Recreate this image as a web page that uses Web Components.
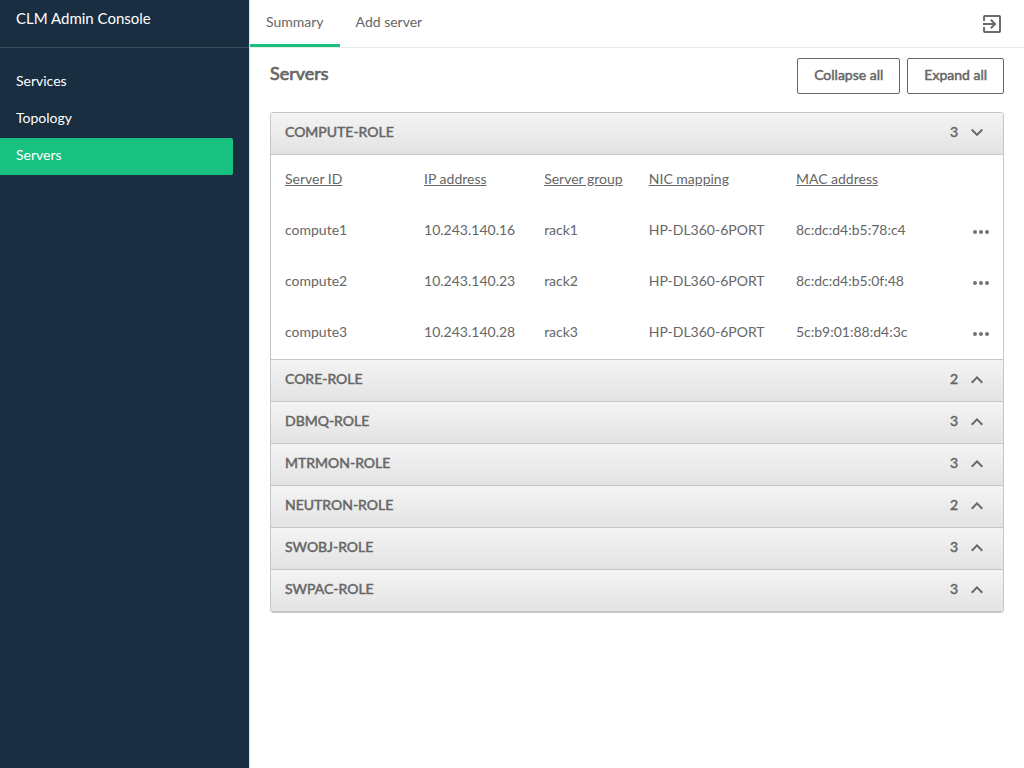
<!DOCTYPE html>
<html lang="en">
<head>
<meta charset="utf-8">
<meta name="viewport" content="width=device-width, initial-scale=1">
<title>CLM Admin Console</title>
<style>
  html { --accent: #19c181; --navy: #192e41; --text: #666; --line: #c6c6c6; }
  body { margin: 0; font: 14px/20px Lato, "Liberation Sans", sans-serif; color: var(--text); background: #fff; }
</style>
</head>
<body>
<clm-shell>
  <clm-sidebar slot="side" heading="CLM Admin Console">
    <clm-nav-item href="#services">Services</clm-nav-item>
    <clm-nav-item href="#topology">Topology</clm-nav-item>
    <clm-nav-item href="#servers" current>Servers</clm-nav-item>
  </clm-sidebar>
  <clm-tab-bar slot="top">
    <clm-tab href="#summary" current>Summary</clm-tab>
    <clm-tab href="#add-server">Add server</clm-tab>
  </clm-tab-bar>
  <clm-servers></clm-servers>
</clm-shell>
<script>
class Base extends HTMLElement {
  constructor() { super(); this.attachShadow({ mode: "open" }); }
  connectedCallback() { this.shadowRoot.innerHTML = this.render(); this.ready(); }
  ready() {}
}

const icons = {
  exit: '<path d="M10.09 15.59 11.5 17l5-5-5-5-1.41 1.41L12.67 11H3v2h9.67zM19 3H5a2 2 0 0 0-2 2v4h2V5h14v14H5v-4H3v4a2 2 0 0 0 2 2h14a2 2 0 0 0 2-2V5a2 2 0 0 0-2-2z"/>',
  down: '<path d="M7.41 7.84 12 12.42l4.59-4.58L18 9.25l-6 6-6-6z"/>',
  up: '<path d="M7.41 15.41 12 10.83l4.59 4.58L18 14l-6-6-6 6z"/>',
  more: '<path d="M6 10a2 2 0 1 0 0 4 2 2 0 0 0 0-4zm12 0a2 2 0 1 0 0 4 2 2 0 0 0 0-4zm-6 0a2 2 0 1 0 0 4 2 2 0 0 0 0-4z"/>'
};

customElements.define("clm-icon", class extends Base {
  render() {
    return `<style>
      :host { display: block; width: 24px; height: 24px; }
      svg { display: block; width: 100%; height: 100%; fill: currentColor; }
    </style><svg viewBox="0 0 24 24" aria-hidden="true">${icons[this.getAttribute("name")]}</svg>`;
  }
});

customElements.define("clm-shell", class extends Base {
  render() {
    return `<style>
      :host { display: grid; grid-template-columns: 249px minmax(0, 1fr); min-height: 100vh; }
      .main { border-left: 1px solid #e0e3e6; }
      main { padding: 10px 20px 20px; }
    </style>
    <slot name="side"></slot>
    <div class="main"><slot name="top"></slot><main><slot></slot></main></div>`;
  }
});

customElements.define("clm-sidebar", class extends Base {
  render() {
    return `<style>
      :host { display: block; background: var(--navy); color: #fff; }
      header { box-sizing: border-box; height: 48px; padding: 8px 16px; border-bottom: 1px solid #3a4f5c; font-size: 15px; line-height: 20px; }
      nav { padding: 16px 16px 0 0; }
    </style>
    <header>${this.getAttribute("heading")}</header>
    <nav aria-label="Main"><slot></slot></nav>`;
  }
});

customElements.define("clm-nav-item", class extends Base {
  render() {
    return `<style>
      :host { display: block; }
      a { display: block; padding: 7px 16px 10px; color: #fff; text-decoration: none; border-radius: 0 2px 2px 0; }
      :host([current]) a { background: var(--accent); }
    </style><a href="${this.getAttribute("href")}"><slot></slot></a>`;
  }
});

customElements.define("clm-tab-bar", class extends Base {
  render() {
    return `<style>
      :host { display: flex; justify-content: space-between; box-sizing: border-box; height: 48px; border-bottom: 1px solid #ebebeb; }
      nav { display: flex; }
      button { margin: 0 20px 0 0; padding: 0; border: 0; background: none; color: #6b6b6b; cursor: pointer; }
    </style>
    <nav aria-label="Views"><slot></slot></nav>
    <button type="button" aria-label="Log out"><clm-icon name="exit"></clm-icon></button>`;
  }
});

customElements.define("clm-tab", class extends Base {
  render() {
    return `<style>
      :host { display: block; }
      a { display: block; padding: 12px 16px; border-bottom: 3px solid transparent; color: inherit; text-decoration: none; }
      :host([current]) a { border-color: var(--accent); }
    </style><a href="${this.getAttribute("href")}"><slot></slot></a>`;
  }
});

customElements.define("clm-button", class extends Base {
  render() {
    return `<style>
      :host { display: block; }
      button { display: block; padding: 6px 16px 8px; border: 1px solid var(--text); border-radius: 2px; background: #fff; color: inherit; font: inherit; -webkit-text-stroke: 0.5px; cursor: pointer; }
    </style><button type="button"><slot></slot></button>`;
  }
});

customElements.define("clm-role", class extends Base {
  static get observedAttributes() { return ["open"]; }
  attributeChangedCallback() { if (this.isConnected && this.shadowRoot.firstChild) this.connectedCallback(); }
  render() {
    const open = this.hasAttribute("open");
    return `<style>
      :host { display: block; border-bottom: 1px solid var(--line); }
      h2 { margin: 0; font: inherit; }
      button { display: flex; align-items: flex-start; width: 100%; height: 41px; margin: 0; padding: 8px 14px 9px; border: 0; background: linear-gradient(#f4f4f4, #e3e3e3); color: inherit; font: inherit; text-align: left; cursor: pointer; }
      .name { flex: 1; padding-top: 1px; -webkit-text-stroke: 0.5px; }
      .count { padding: 1px 7px 0 0; -webkit-text-stroke: 0.5px; }
      .body { border-top: 1px solid var(--line); }
    </style>
    <h2><button type="button" aria-expanded="${open}">
      <span class="name">${this.getAttribute("name")}</span>
      <span class="count">${this.getAttribute("count")}</span>
      <clm-icon name="${open ? "down" : "up"}"></clm-icon>
    </button></h2>
    ${open ? '<div class="body"><slot></slot></div>' : ""}`;
  }
  ready() {
    this.shadowRoot.querySelector("button").onclick = () => this.toggleAttribute("open");
  }
});

customElements.define("clm-server-table", class extends Base {
  render() {
    const heads = ["Server ID", "IP address", "Server group", "NIC mapping", "MAC address"];
    const rows = [
      ["compute1", "10.243.140.16", "rack1", "HP-DL360-6PORT", "8c:dc:d4:b5:78:c4"],
      ["compute2", "10.243.140.23", "rack2", "HP-DL360-6PORT", "8c:dc:d4:b5:0f:48"],
      ["compute3", "10.243.140.28", "rack3", "HP-DL360-6PORT", "5c:b9:01:88:d4:3c"]
    ];
    return `<style>
      :host { display: block; }
      table { width: 100%; table-layout: fixed; border-collapse: collapse; }
      .id { width: 19%; } .ip { width: 16.4%; } .group { width: 14.3%; } .nic { width: 20.1%; }
      th, td { height: 47px; padding: 0 0 4px 14px; font-weight: 400; text-align: left; white-space: nowrap; }
      td:last-child { padding: 0 10px 0 0; }
      th button { padding: 0; border: 0; background: none; color: inherit; font: inherit; text-decoration: underline; cursor: pointer; }
      .more { display: block; margin: 0 0 0 auto; padding: 0; border: 0; background: none; color: #737373; cursor: pointer; }
    </style>
    <table>
      <colgroup><col class="id"><col class="ip"><col class="group"><col class="nic"><col><col width="50"></colgroup>
      <thead><tr>${heads.map(h => `<th scope="col"><button type="button">${h}</button></th>`).join("")}<td></td></tr></thead>
      <tbody>${rows.map(r => `<tr>${r.map(c => `<td>${c}</td>`).join("")}<td><button class="more" type="button" aria-label="Actions for ${r[0]}"><clm-icon name="more"></clm-icon></button></td></tr>`).join("")}</tbody>
    </table>`;
  }
});

customElements.define("clm-servers", class extends Base {
  render() {
    return `<style>
      :host { display: block; }
      .bar { display: flex; align-items: flex-start; gap: 7px; margin-bottom: 18px; }
      h1 { flex: 1; margin: 3px 0 0; font-size: 18px; line-height: 24px; font-weight: 400; -webkit-text-stroke: 0.7px; }
      .roles { border: 1px solid var(--line); border-radius: 3px; overflow: hidden; }
    </style>
    <div class="bar">
      <h1>Servers</h1>
      <clm-button id="collapse">Collapse all</clm-button>
      <clm-button id="expand">Expand all</clm-button>
    </div>
    <div class="roles">
      <clm-role name="COMPUTE-ROLE" count="3" open><clm-server-table></clm-server-table></clm-role>
      <clm-role name="CORE-ROLE" count="2"></clm-role>
      <clm-role name="DBMQ-ROLE" count="3"></clm-role>
      <clm-role name="MTRMON-ROLE" count="3"></clm-role>
      <clm-role name="NEUTRON-ROLE" count="2"></clm-role>
      <clm-role name="SWOBJ-ROLE" count="3"></clm-role>
      <clm-role name="SWPAC-ROLE" count="3"></clm-role>
    </div>`;
  }
  ready() {
    const all = open => () => this.shadowRoot.querySelectorAll("clm-role").forEach(r => r.toggleAttribute("open", open));
    this.shadowRoot.querySelector("#collapse").onclick = all(false);
    this.shadowRoot.querySelector("#expand").onclick = all(true);
  }
});
</script>
</body>
</html>
